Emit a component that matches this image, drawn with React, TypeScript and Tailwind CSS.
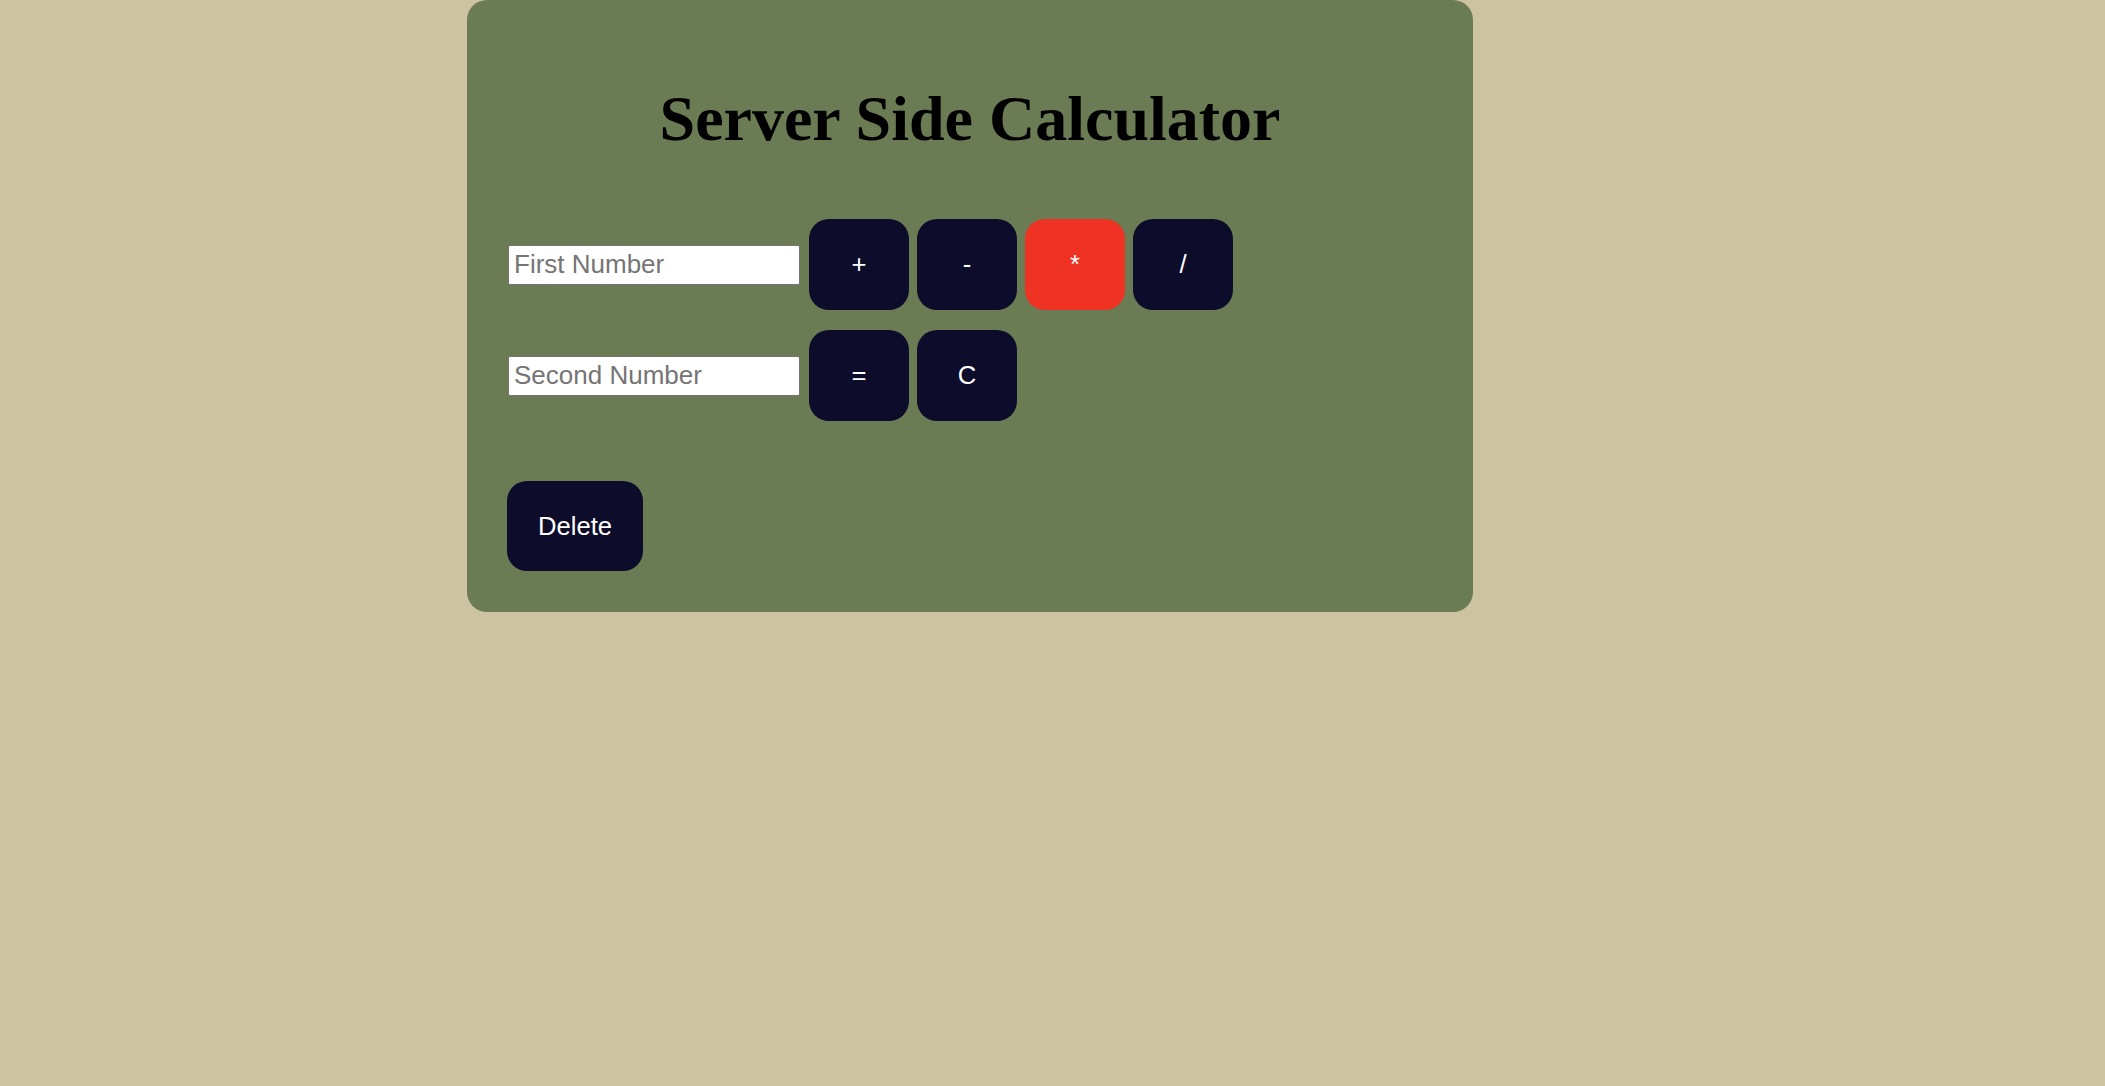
import React, { useState } from 'react';

const ops = ['+', '-', '*', '/'];

function OpButton({ label, active, onClick }: { label: string; active?: boolean; onClick?: () => void }) {
  return (
    <button
      onClick={onClick}
      className={`w-[100px] h-[91px] rounded-[20px] text-white text-[25.6px] font-['Liberation_Sans',Arial,sans-serif] ${
        active ? 'bg-[#ee3224]' : 'bg-[#0d0d2b]'
      }`}
    >
      {label}
    </button>
  );
}

export default function App() {
  const [first, setFirst] = useState('');
  const [second, setSecond] = useState('');
  const [op, setOp] = useState('*');

  const clear = () => {
    setFirst('');
    setSecond('');
  };

  return (
    <div className="min-h-screen w-full bg-[#cdc3a3] font-['Liberation_Serif','Times_New_Roman',serif]">
      <div className="ml-[467px] w-[1006px] rounded-[20px] bg-[#6b7b53] pt-[82px] pb-[41px] px-[40px]">
        <h1 className="text-center text-[64px] font-bold leading-[74px] text-black">Server Side Calculator</h1>

        <div className="mt-[63px] flex flex-col gap-[20px]">
          <div className="flex items-center">
            <input
              value={first}
              onChange={e => setFirst(e.target.value)}
              placeholder="First Number"
              className="ml-[1px] w-[292px] h-[40px] border border-[#767676] rounded-[2px] bg-white px-[5px] text-[26px] text-black placeholder:text-[#757575] font-['Liberation_Sans',Arial,sans-serif]"
            />
            <div className="ml-[9px] flex gap-[8px]">
              {ops.map(o => (
                <OpButton key={o} label={o} active={o === op} onClick={() => setOp(o)} />
              ))}
            </div>
          </div>

          <div className="flex items-center">
            <input
              value={second}
              onChange={e => setSecond(e.target.value)}
              placeholder="Second Number"
              className="ml-[1px] w-[292px] h-[40px] border border-[#767676] rounded-[2px] bg-white px-[5px] text-[26px] text-black placeholder:text-[#757575] font-['Liberation_Sans',Arial,sans-serif]"
            />
            <div className="ml-[9px] flex gap-[8px]">
              <OpButton label="=" />
              <OpButton label="C" onClick={clear} />
            </div>
          </div>
        </div>

        <button className="mt-[60px] w-[136px] h-[90px] rounded-[20px] bg-[#0d0d2b] text-white text-[25.6px] font-['Liberation_Sans',Arial,sans-serif]">
          Delete
        </button>
      </div>
    </div>
  );
}
